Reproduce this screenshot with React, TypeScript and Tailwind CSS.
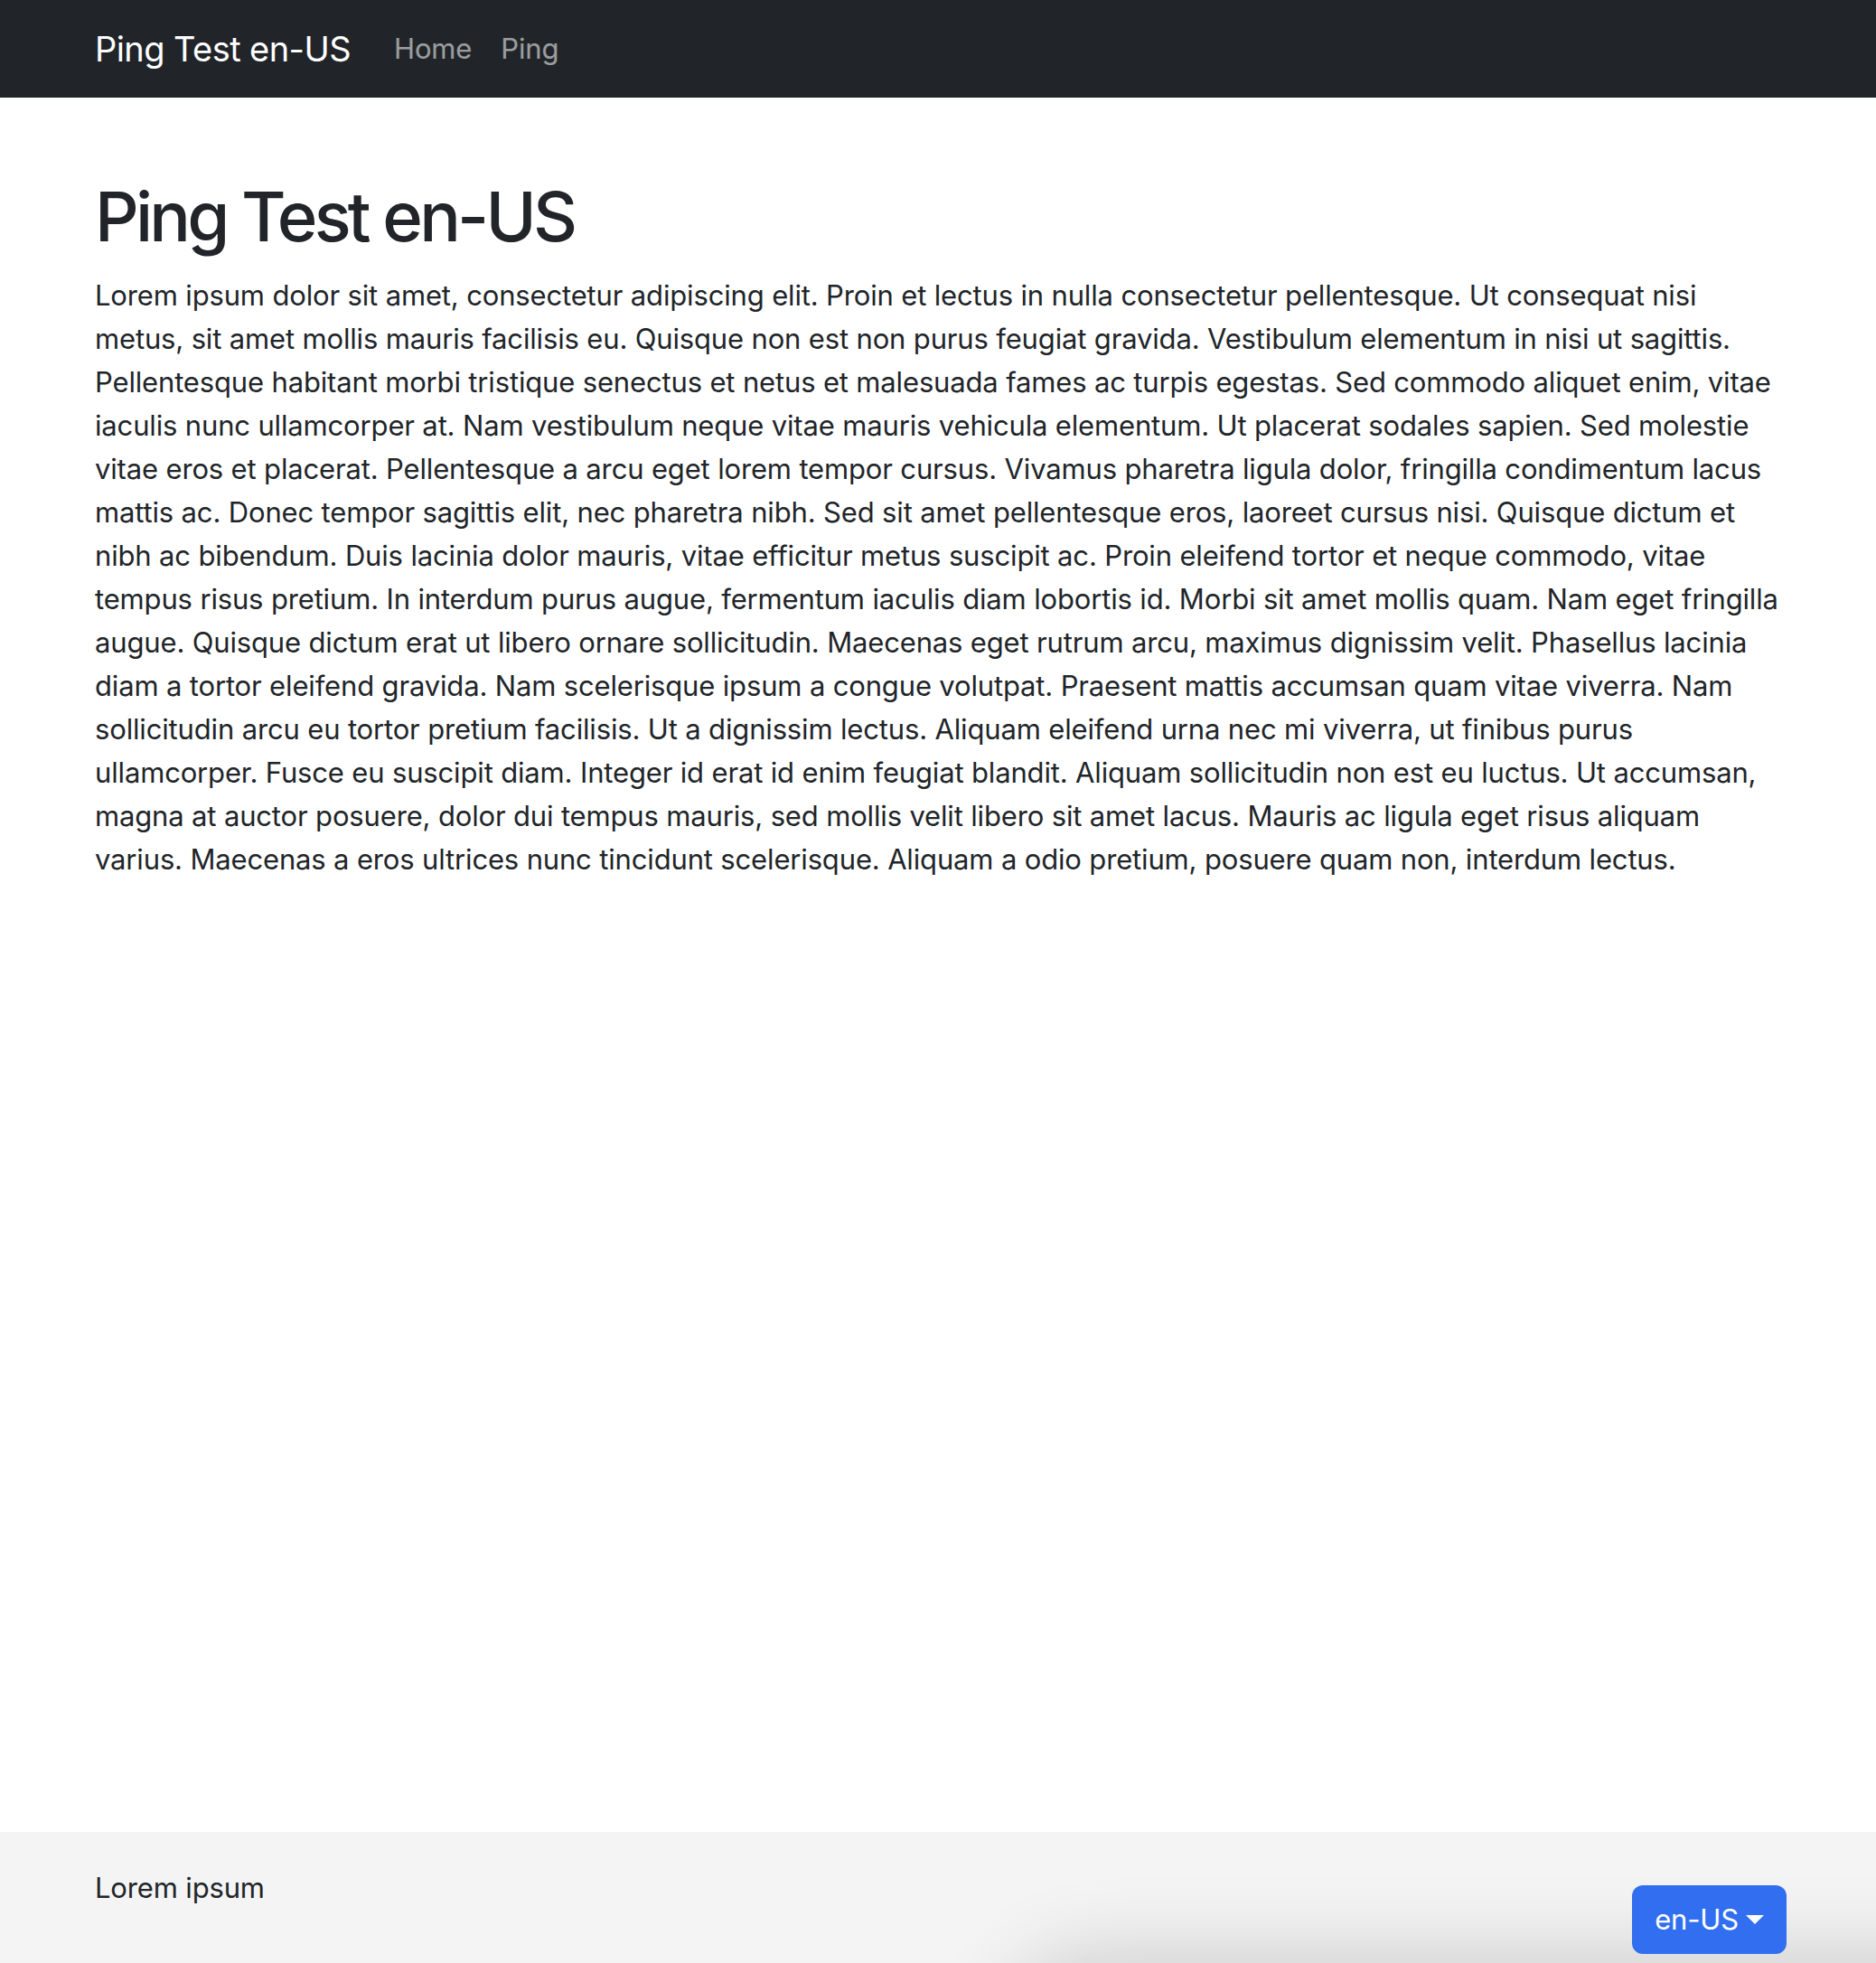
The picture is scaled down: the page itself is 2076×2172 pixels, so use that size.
const lorem =
  "Lorem ipsum dolor sit amet, consectetur adipiscing elit. Proin et lectus in nulla consectetur pellentesque. Ut consequat nisi metus, sit amet mollis mauris facilisis eu. Quisque non est non purus feugiat gravida. Vestibulum elementum in nisi ut sagittis. Pellentesque habitant morbi tristique senectus et netus et malesuada fames ac turpis egestas. Sed commodo aliquet enim, vitae iaculis nunc ullamcorper at. Nam vestibulum neque vitae mauris vehicula elementum. Ut placerat sodales sapien. Sed molestie vitae eros et placerat. Pellentesque a arcu eget lorem tempor cursus. Vivamus pharetra ligula dolor, fringilla condimentum lacus mattis ac. Donec tempor sagittis elit, nec pharetra nibh. Sed sit amet pellentesque eros, laoreet cursus nisi. Quisque dictum et nibh ac bibendum. Duis lacinia dolor mauris, vitae efficitur metus suscipit ac. Proin eleifend tortor et neque commodo, vitae tempus risus pretium. In interdum purus augue, fermentum iaculis diam lobortis id. Morbi sit amet mollis quam. Nam eget fringilla augue. Quisque dictum erat ut libero ornare sollicitudin. Maecenas eget rutrum arcu, maximus dignissim velit. Phasellus lacinia diam a tortor eleifend gravida. Nam scelerisque ipsum a congue volutpat. Praesent mattis accumsan quam vitae viverra. Nam sollicitudin arcu eu tortor pretium facilisis. Ut a dignissim lectus. Aliquam eleifend urna nec mi viverra, ut finibus purus ullamcorper. Fusce eu suscipit diam. Integer id erat id enim feugiat blandit. Aliquam sollicitudin non est eu luctus. Ut accumsan, magna at auctor posuere, dolor dui tempus mauris, sed mollis velit libero sit amet lacus. Mauris ac ligula eget risus aliquam varius. Maecenas a eros ultrices nunc tincidunt scelerisque. Aliquam a odio pretium, posuere quam non, interdum lectus.";

function Navbar() {
  return (
    <nav className="h-[108px] bg-[#212529]">
      <div className="mx-auto flex h-full w-[1920px] items-center pl-[27px] pr-6">
        <a className="mr-8 text-[38px] leading-[60px] tracking-[-0.015em] text-white" href="#">
          Ping Test en-US
        </a>
        <a className="px-4 text-[31px] leading-[48px] text-white/55" href="#">
          Home
        </a>
        <a className="px-4 text-[31px] leading-[48px] text-white/55" href="#">
          Ping
        </a>
      </div>
    </nav>
  );
}

export default function App() {
  return (
    <div
      className="flex min-h-screen flex-col bg-white text-[31px] leading-[48px] tracking-[-0.005em] text-[#212529]"
      style={{ fontFamily: "Inter, 'Noto Sans', sans-serif" }}
    >
      <Navbar />

      {/* MAIN */}
      <main className="mx-auto w-[1920px] pl-[27px] pr-6 pt-[83px]">
        <h1 className="mb-4 text-[76px] font-medium leading-[96px] tracking-[-0.05em]">Ping Test en-US</h1>
        <p>{lorem}</p>
      </main>

      {/* FOOTER */}
      <footer className="relative mt-auto h-[145px] overflow-hidden bg-[#f4f4f4]">
        <div className="pointer-events-none absolute left-[1150px] right-[-200px] top-[175px] h-[120px] rounded-[60px] shadow-[0_0_90px_40px_rgba(0,0,0,0.16)]" />
        <div className="relative mx-auto flex w-[1920px] items-start justify-between pl-[27px] pr-[21px] pt-[38px]">
          <span>Lorem ipsum</span>
          <button className="mt-[21px] flex h-[76px] items-center rounded-[12px] bg-[#316ff0] px-[25px] text-white">
            en-US
            <span className="ml-[8px] inline-block h-0 w-0 border-x-[10px] border-t-[10px] border-x-transparent border-t-white" />
          </button>
        </div>
      </footer>
    </div>
  );
}
